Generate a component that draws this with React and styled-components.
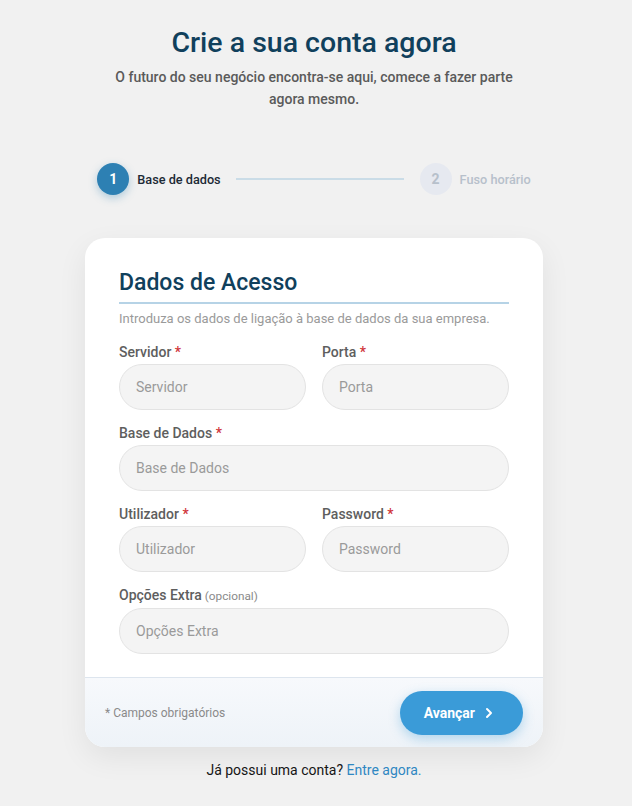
import styled, { createGlobalStyle } from "styled-components";
import { ChevronRight } from "lucide-react";

const GlobalStyle = createGlobalStyle`
  body {
    margin: 0;
    background: #f1f1f1;
    font-family: Roboto, "Liberation Sans", sans-serif;
  }
  * {
    box-sizing: border-box;
  }
`;

const steps = [
  { n: 1, label: "Base de dados", active: true },
  { n: 2, label: "Fuso horário", active: false },
];

const rows = [
  [
    { label: "Servidor", required: true },
    { label: "Porta", required: true },
  ],
  [{ label: "Base de Dados", required: true }],
  [
    { label: "Utilizador", required: true },
    { label: "Password", required: true, type: "password" },
  ],
  [{ label: "Opções Extra", optional: true }],
];

const App = () => {
  return (
    <Page>
      <GlobalStyle />
      <Title>Crie a sua conta agora</Title>
      <Subtitle>
        O futuro do seu negócio encontra-se aqui, comece a fazer parte agora
        mesmo.
      </Subtitle>

      <Stepper>
        <Step>
          <StepCircle active={steps[0].active}>{steps[0].n}</StepCircle>
          <StepLabel active={steps[0].active}>{steps[0].label}</StepLabel>
        </Step>
        <StepLine />
        <Step>
          <StepCircle active={steps[1].active}>{steps[1].n}</StepCircle>
          <StepLabel active={steps[1].active}>{steps[1].label}</StepLabel>
        </Step>
      </Stepper>

      <Card>
        <CardBody>
          <CardTitle>Dados de Acesso</CardTitle>
          <CardText>
            Introduza os dados de ligação à base de dados da sua empresa.
          </CardText>

          {rows.map((row, i) => (
            <Row key={i} cols={row.length}>
              {row.map((field) => (
                <Field key={field.label}>
                  <Label>
                    {field.label}
                    {field.required && <Required> *</Required>}
                    {field.optional && <Optional> (opcional)</Optional>}
                  </Label>
                  <Input
                    type={field.type || "text"}
                    placeholder={field.label}
                  />
                </Field>
              ))}
            </Row>
          ))}
        </CardBody>

        <CardFooter>
          <FooterNote>* Campos obrigatórios</FooterNote>
          <NextButton type="button">
            Avançar
            <ChevronRight size={16} strokeWidth={3} />
          </NextButton>
        </CardFooter>
      </Card>

      <LoginText>
        Já possui uma conta? <LoginLink href="#">Entre agora.</LoginLink>
      </LoginText>
    </Page>
  );
};

export default App;

const Page = styled.div`
  display: flex;
  flex-direction: column;
  align-items: center;
  padding: 26px 4px 20px 0;
`;

const Title = styled.h1`
  margin: 0;
  font-size: 28.5px;
  line-height: 34px;
  font-weight: 500;
  color: #10405c;
`;

const Subtitle = styled.p`
  margin: 6px 0 0;
  max-width: 420px;
  text-align: center;
  font-size: 14px;
  line-height: 22px;
  font-weight: 500;
  color: #5a5a5a;
`;

const Stepper = styled.div`
  display: flex;
  align-items: center;
  margin-top: 53px;
`;

const Step = styled.div`
  display: flex;
  align-items: center;
  gap: 8px;
`;

const StepCircle = styled.div`
  width: 32px;
  height: 32px;
  border-radius: 50%;
  display: flex;
  align-items: center;
  justify-content: center;
  font-size: 14px;
  font-weight: 700;
  background: ${(p) => (p.active ? "#2d80b3" : "#e6e9f0")};
  color: ${(p) => (p.active ? "#fff" : "#b7c0cb")};
  box-shadow: ${(p) =>
    p.active ? "0 3px 8px rgba(45, 128, 179, 0.35)" : "none"};
`;

const StepLabel = styled.span`
  font-size: 12.7px;
  font-weight: 500;
  color: ${(p) => (p.active ? "#1c2a36" : "#b7c0cb")};
`;

const StepLine = styled.div`
  width: 168px;
  height: 2px;
  margin: 0 16px 0 15px;
  background: #cadce7;
`;

const Card = styled.div`
  width: 458px;
  margin-top: 43px;
  background: #fff;
  border-radius: 20px;
  overflow: hidden;
  box-shadow: 0 10px 30px rgba(0, 0, 0, 0.07);
`;

const CardBody = styled.div`
  padding: 32px 34px 23px;
`;

const CardTitle = styled.h2`
  margin: 0;
  padding-bottom: 6px;
  font-size: 23px;
  line-height: 26px;
  font-weight: 500;
  color: #10405c;
  border-bottom: 2px solid #b6d3e6;
`;

const CardText = styled.p`
  margin: 6px 0 15px;
  font-size: 13px;
  line-height: 18px;
  color: #9a9a9a;
`;

const Row = styled.div`
  display: grid;
  grid-template-columns: ${(p) => (p.cols === 2 ? "1fr 1fr" : "1fr")};
  gap: 16px;
  margin-bottom: 14px;

  &:last-child {
    margin-bottom: 0;
  }
`;

const Field = styled.div`
  display: flex;
  flex-direction: column;
  gap: 3px;
`;

const Label = styled.label`
  font-size: 14px;
  line-height: 18px;
  font-weight: 500;
  color: #5e5e5e;
`;

const Required = styled.span`
  color: #d0343a;
`;

const Optional = styled.span`
  font-size: 11.8px;
  font-weight: 400;
  color: #8a8a8a;
`;

const Input = styled.input`
  width: 100%;
  height: 46px;
  padding: 0 16px;
  border-radius: 23px;
  border: 1px solid #e3e3e3;
  background: #f4f4f4;
  font-family: inherit;
  font-size: 14px;
  color: #333;
  outline: none;

  &::placeholder {
    color: #9a9a9a;
  }
`;

const CardFooter = styled.div`
  display: flex;
  align-items: center;
  justify-content: space-between;
  padding: 13px 20px 12px;
  border-top: 1px solid #dde5ee;
  background: linear-gradient(180deg, #f7f9fc 0%, #eef3f8 100%);
`;

const FooterNote = styled.span`
  font-size: 12px;
  color: #8a8a8a;
`;

const NextButton = styled.button`
  display: flex;
  align-items: center;
  gap: 6px;
  height: 44px;
  padding: 0 26px 0 24px;
  border: none;
  border-radius: 22px;
  background: #3a9bd8;
  color: #fff;
  font-family: inherit;
  font-size: 14px;
  font-weight: 700;
  box-shadow: 0 4px 12px rgba(58, 155, 216, 0.35);
  cursor: pointer;
`;

const LoginText = styled.p`
  margin: 13px 0 0;
  font-size: 14px;
  line-height: 20px;
  color: #151515;
`;

const LoginLink = styled.a`
  color: #2f87c2;
  text-decoration: none;
`;
